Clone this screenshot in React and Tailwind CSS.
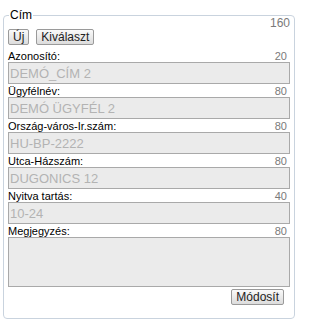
const fields = [
  { label: 'Azonosító:', max: 20, value: 'DEMÓ_CÍM 2' },
  { label: 'Ügyfélnév:', max: 80, value: 'DEMÓ ÜGYFÉL 2' },
  { label: 'Ország-város-Ir.szám:', max: 80, value: 'HU-BP-2222' },
  { label: 'Utca-Házszám:', max: 80, value: 'DUGONICS 12' },
  { label: 'Nyitva tartás:', max: 40, value: '10-24' },
];

const btn =
  'h-[16px] px-[4px] border border-[#9a9a9a] rounded-[2px] bg-gradient-to-b from-[#fafafa] to-[#dcdcdc] text-[12px] leading-[14px] text-[#222]';

function LabelRow({ label, max }) {
  return (
    <div className="flex justify-between items-end h-[13px] text-[11px] leading-[12px]">
      <span className="text-black">{label}</span>
      <span className="text-[#7a7a7a] pr-[3px]">{max}</span>
    </div>
  );
}

export default function App() {
  return (
    <div className="pl-[3px] pt-[8px] font-['Liberation_Sans',Arial,sans-serif]">
      <fieldset className="w-[292px] h-[311px] border border-[#c9d3de] rounded-[4px] px-[4px]">
        <legend className="ml-[1px] px-[1px] text-[12px] leading-[14px] text-black">Cím</legend>
        <div className="-mt-[5px] flex justify-end h-[12px] text-[12px] leading-[12px] text-[#7a7a7a]">160</div>
        <div className="flex gap-[7px]">
          <button className={btn}>Új</button>
          <button className={btn}>Kiválaszt</button>
        </div>
        <div className="mt-[4px] flex flex-col">
          {fields.map((f) => (
            <div key={f.label} className="flex flex-col">
              <LabelRow label={f.label} max={f.max} />
              <input
                readOnly
                value={f.value}
                className="h-[22px] w-full pl-[1px] border border-[#a9a9a9] bg-[#ebebeb] text-[13px] text-[#b3b3b3] outline-none"
              />
            </div>
          ))}
          <LabelRow label="Megjegyzés:" max={80} />
          <textarea
            readOnly
            className="h-[50px] w-full border border-[#a9a9a9] bg-[#ebebeb] resize-none outline-none"
          />
          <div className="flex justify-end pr-[6px] mt-[2px]">
            <button className={btn}>Módosít</button>
          </div>
        </div>
      </fieldset>
    </div>
  );
}
